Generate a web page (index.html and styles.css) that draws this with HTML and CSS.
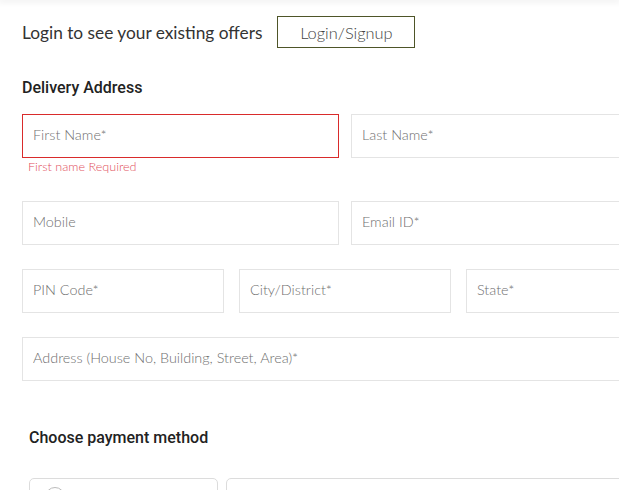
FILE: index.html
```html
<!DOCTYPE html>
<html lang="en">
<head>
<meta charset="utf-8">
<title>Checkout</title>
<link rel="stylesheet" href="styles.css">
</head>
<body>
<div class="topbar"></div>
<main class="page">
  <div class="login-row">
    <span class="login-text">Login to see your existing offers</span>
    <button class="login-btn" type="button">Login/Signup</button>
  </div>

  <h2 class="section-title">Delivery Address</h2>

  <div class="row two has-error">
    <div class="field">
      <input class="input error" type="text" placeholder="First Name*">
      <div class="err-msg">First name Required</div>
    </div>
    <div class="field">
      <input class="input" type="text" placeholder="Last Name*">
    </div>
  </div>

  <div class="row two">
    <div class="field"><input class="input" type="text" placeholder="Mobile"></div>
    <div class="field"><input class="input" type="text" placeholder="Email ID*"></div>
  </div>

  <div class="row three">
    <div class="field"><input class="input" type="text" placeholder="PIN Code*"></div>
    <div class="field"><input class="input" type="text" placeholder="City/District*"></div>
    <div class="field"><input class="input" type="text" placeholder="State*"></div>
  </div>

  <div class="row one">
    <div class="field"><input class="input" type="text" placeholder="Address (House No, Building, Street, Area)*"></div>
  </div>

  <section class="payment">
    <h2 class="pay-title">Choose payment method</h2>
    <div class="pay-options">
      <div class="pay-card small"><span class="radio"></span></div>
      <div class="pay-card wide"></div>
    </div>
  </section>
</main>
</body>
</html>
```

FILE: styles.css
```css
* { box-sizing: border-box; }
html, body { margin: 0; padding: 0; background: #fff; overflow: hidden; }
body { font-family: Lato, "Liberation Sans", sans-serif; color: #333; width: 619px; height: 490px; }

.topbar {
  height: 0;
  box-shadow: 0 0 6px 2px rgba(0,0,0,0.08);
}

.page {
  width: 646px;
  margin-left: 22px;
}

.login-row {
  display: flex;
  align-items: center;
  gap: 15px;
  padding-top: 16px;
  height: 48px;
}
.login-text {
  font-size: 17.3px;
  color: #333;
}
.login-btn {
  height: 32px;
  width: 138px;
  border: 1px solid #4e5528;
  background: #fff;
  font-family: Lato, "Liberation Sans", sans-serif;
  font-size: 16.4px;
  font-weight: 300;
  color: #444;
  padding: 0;
}

.section-title {
  margin: 30px 0 17px;
  font-family: Roboto, "Liberation Sans", sans-serif;
  font-weight: 500;
  font-size: 16px;
  line-height: 19px;
  color: #222;
}

.row { display: grid; margin-bottom: 24px; }
.row.has-error { margin-bottom: 43px; }
.row.two { grid-template-columns: 317px 317px; column-gap: 12px; }
.row.three { grid-template-columns: 202px 212px 202px; column-gap: 15px; }
.row.one { grid-template-columns: 1fr; }

.field { min-width: 0; }

.input {
  display: block;
  width: 100%;
  height: 44px;
  border: 1px solid #e4e4e4;
  background: #fff;
  padding: 0 10px 4px;
  font-family: Lato, "Liberation Sans", sans-serif;
  font-size: 14.4px;
  font-weight: 300;
  color: #333;
  outline: none;
}
.input::placeholder { color: #6f6f6f; }
.input.error { border-color: #d92b2b; }

.err-msg {
  margin: 1px 0 -16px 6px;
  height: 15px;
  font-size: 12.6px;
  font-weight: 300;
  line-height: 15px;
  color: #e2505c;
}

.payment { padding-left: 7px; padding-top: 23px; }
.pay-title {
  margin: 0 0 31px;
  font-family: Roboto, "Liberation Sans", sans-serif;
  font-weight: 500;
  font-size: 16px;
  line-height: 19px;
  color: #222;
}
.pay-options { display: flex; gap: 8px; }
.pay-card {
  height: 50px;
  border: 1px solid #dcdcdc;
  border-radius: 5px;
  background: #fff;
  position: relative;
}
.pay-card.small { width: 189px; }
.pay-card.wide { flex: 1; }
.radio {
  position: absolute;
  left: 15px;
  top: 8px;
  width: 20px;
  height: 20px;
  border: 1px solid #bbb;
  border-radius: 50%;
}
```
